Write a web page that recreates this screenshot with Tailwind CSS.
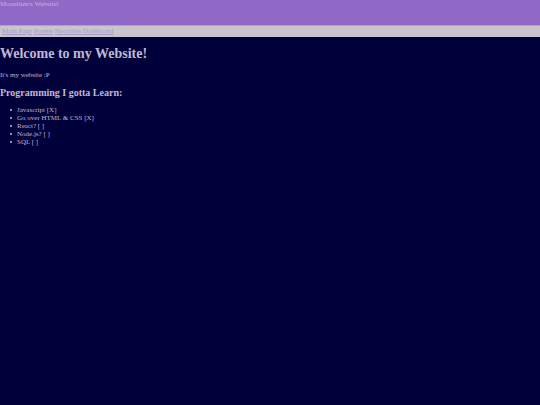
<!DOCTYPE html>
<html lang="en">
<head>
<meta charset="utf-8">
<meta name="viewport" content="width=device-width, initial-scale=1">
<title>Moonbien's Website!</title>
<script src="https://cdn.jsdelivr.net/npm/@tailwindcss/browser@4"></script>
</head>
<body class="min-h-screen bg-[#00003a] font-['Liberation_Serif',serif] text-[7px] leading-[8px] text-[#c0b8d4]">
<header class="bg-[#9068c5] pb-[17px] text-[#cbb6dc]">Moonbien's Website!</header>
<nav class="flex gap-[2px] border-t border-[#b59ccb] bg-[#cac4cc] px-[2px] pt-px pb-[2px] text-[#a49cc8]">
<a href="#" class="underline">Main Page</a>
<a href="#" class="underline">Poems</a>
<a href="#" class="underline">Neocities Dashboard</a>
</nav>
<main class="pt-[9px]">
<h1 class="text-[14px] leading-[16px] font-bold">Welcome to my Website!</h1>
<p class="mt-[9px]">It's my website :P</p>
<h2 class="mt-[8px] text-[10px] leading-[12px] font-bold">Programming I gotta Learn:</h2>
<ul class="mt-[7px] pl-[10px]">
<li class="flex items-center gap-[5px] before:size-[2px] before:rounded-full before:bg-current">Javascript [X]</li>
<li class="flex items-center gap-[5px] before:size-[2px] before:rounded-full before:bg-current">Go over HTML &amp; CSS [X]</li>
<li class="flex items-center gap-[5px] before:size-[2px] before:rounded-full before:bg-current">React? [ ]</li>
<li class="flex items-center gap-[5px] before:size-[2px] before:rounded-full before:bg-current">Node.js? [ ]</li>
<li class="flex items-center gap-[5px] before:size-[2px] before:rounded-full before:bg-current">SQL [ ]</li>
</ul>
</main>
</body>
</html>
